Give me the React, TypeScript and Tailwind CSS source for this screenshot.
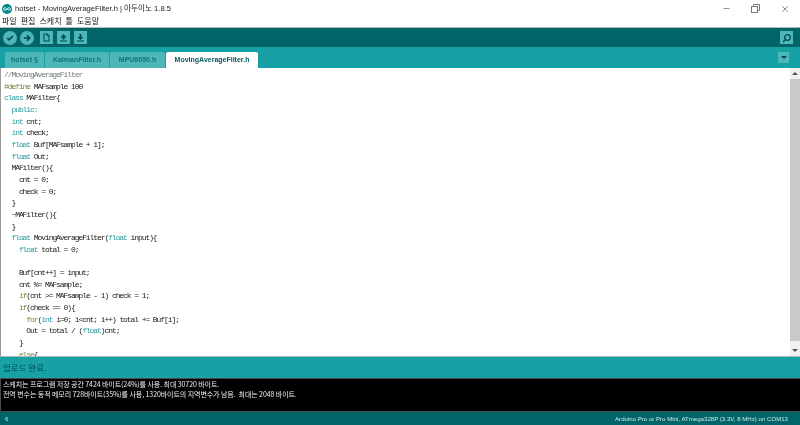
import React from 'react';
import { Minus, X } from 'lucide-react';

const KW = 'text-[#2a9ca0]';
const PP = 'text-[#76883c]';

type Seg = [string, string?];

const lines: Seg[][] = [
  [['//MovingAverageFilter', 'text-[#707a7a]']],
  [['#define', PP], [' MAFsample 100']],
  [['class', KW], [' MAFilter{']],
  [['  public:', KW]],
  [['  '], ['int', KW], [' cnt;']],
  [['  '], ['int', KW], [' check;']],
  [['  '], ['float', KW], [' Buf[MAFsample + 1];']],
  [['  '], ['float', KW], [' Out;']],
  [['  MAFilter(){']],
  [['    cnt = 0;']],
  [['    check = 0;']],
  [['  }']],
  [['  ~MAFilter(){']],
  [['  }']],
  [['  '], ['float', KW], [' MovingAverageFilter('], ['float', KW], [' input){']],
  [['    '], ['float', KW], [' total = 0;']],
  [[' ']],
  [['    Buf[cnt++] = input;']],
  [['    cnt %= MAFsample;']],
  [['    '], ['if', PP], ['(cnt >= MAFsample - 1) check = 1;']],
  [['    '], ['if', PP], ['(check == 0){']],
  [['      '], ['for', PP], ['('], ['int', KW], [' i=0; i<cnt; i++) total += Buf[i];']],
  [['      Out = total / ('], ['float', KW], [')cnt;']],
  [['    }']],
  [['    '], ['else', PP], ['{']],
];

function ArduinoLogo() {
  return (
    <svg width="10" height="10" viewBox="0 0 22 22">
      <circle cx="11" cy="11" r="11" fill="#00878f" />
      <path d="M6.5 8c-4 0-4 6 0 6 2.500 0 3.500-3 4.500-3s2 3 4.500 3c4 0 4-6 0-6-2.500 0-3.500 3-4.500 3s-2-3-4.500-3z" fill="none" stroke="#fff" strokeWidth="1.800" />
    </svg>
  );
}

function RoundButton({ children }: { children: React.ReactNode }) {
  return (
    <div className="w-[14px] h-[14px] rounded-full bg-[#4db6b9] flex items-center justify-center">
      <svg width="10" height="10" viewBox="0 0 11 11" fill="none" stroke="#00494d" strokeWidth="1.800">
        {children}
      </svg>
    </div>
  );
}

function SquareButton({ children }: { children: React.ReactNode }) {
  return (
    <div className="w-[13px] h-[13px] bg-[#4db6b9] flex items-center justify-center">
      <svg width="9" height="9" viewBox="0 0 9 9" fill="#00494d">
        {children}
      </svg>
    </div>
  );
}

function Tab({ label, width, active }: { label: string; width: string; active?: boolean }) {
  return (
    <div
      className={
        (active
          ? 'bg-white text-[#005c5f] '
          : 'bg-[#4db6b9] text-[#0b7478] ') +
        width +
        ' h-[16px] flex items-center justify-center text-[7px] font-bold rounded-t-[2px]'
      }
    >
      {label}
    </div>
  );
}

export default function App() {
  return (
    <div className="w-[800px] h-[425px] flex flex-col overflow-hidden bg-white font-['Liberation_Sans',sans-serif] blur-[0.3px]">
      {/* window title */}
      <div className="h-[15px] pt-[2px] flex items-center bg-white shrink-0">
        <div className="ml-[2px] mr-[3px] flex"><ArduinoLogo /></div>
        <span className="text-[7.6px] text-[#222] font-['Liberation_Sans','Noto_Sans_CJK_KR',sans-serif]">hotset - MovingAverageFilter.h | 아두이노 1.8.5</span>
        <div className="ml-auto flex items-center text-[#777]">
          <Minus size={9} className="mr-[20px]" />
          <svg width="9" height="9" viewBox="0 0 9 9" fill="none" stroke="#777" className="mr-[20px]">
            <rect x="0.500" y="2.500" width="6" height="6" />
            <path d="M2.500 2.500v-2h6v6h-2" />
          </svg>
          <X size={10} className="mr-[10px]" />
        </div>
      </div>
      {/* menu */}
      <div className="h-[12px] flex items-center gap-[4px] pl-[2px] bg-white text-[8px] text-[#111] font-['Noto_Sans_CJK_KR',sans-serif] shrink-0">
        <span>파일</span>
        <span>편집</span>
        <span>스케치</span>
        <span>툴</span>
        <span>도움말</span>
      </div>
      <div className="h-[1px] bg-[#b8b8b8] shrink-0" />
      {/* toolbar */}
      <div className="h-[19px] bg-[#006468] flex items-center pl-[3px] pr-[7px] shrink-0">
        <div className="flex items-center gap-[3px]">
          <RoundButton><path d="M2.500 5.500l2 2 4-4" /></RoundButton>
          <RoundButton><path d="M2 5.500h6.500M5.500 2.500l3 3-3 3" /></RoundButton>
        </div>
        <div className="flex items-center gap-[4px] ml-[6px]">
          <SquareButton><path d="M1.500 0.500h4l2 2v6h-6zM2.500 1.500v6h4v-4.500h-1.500v-1.500z" fillRule="evenodd" /></SquareButton>
          <SquareButton><path d="M4.500 1l3 3.500h-2v2h-2v-2h-2zM1 7.500h7v1h-7z" /></SquareButton>
          <SquareButton><path d="M3.500 1h2v3h2l-3 3-3-3h2zM1 7.500h7v1h-7z" /></SquareButton>
        </div>
        <div className="ml-auto w-[13px] h-[13px] bg-[#4db6b9] flex items-center justify-center">
          <svg width="10" height="10" viewBox="0 0 10 10" fill="none" stroke="#00494d" strokeWidth="1.300">
            <circle cx="5.500" cy="4.500" r="2.800" />
            <path d="M3.500 6.500l-2.500 2.500" />
          </svg>
        </div>
      </div>
      {/* tabs */}
      <div className="h-[21px] bg-[#17a1a5] flex items-end pl-[5px] pr-[11px] shrink-0">
        <div className="flex gap-[1px]">
          <Tab label="hotset §" width="w-[39px]" />
          <Tab label="KalmanFilter.h" width="w-[64px]" />
          <Tab label="MPU6050.h" width="w-[55px]" />
          <Tab label="MovingAverageFilter.h" width="w-[92px]" active />
        </div>
        <div className="ml-auto mb-[5px] w-[11px] h-[11px] bg-[#4db6b9] flex items-center justify-center">
          <div className="w-0 h-0 border-x-[3px] border-x-transparent border-t-[3px] border-t-[#00494d]" />
        </div>
      </div>
      {/* editor */}
      <div className="flex-1 min-h-0 flex bg-white">
        <div className="w-[1px] bg-[#9a9a9a]" />
        <pre className="flex-1 overflow-hidden pl-[3px] pt-[1px] font-['Liberation_Mono',monospace] text-[8px] leading-[11.67px] tracking-[-1.08px] text-[#222]">
          {lines.map((segs, i) => (
            <div key={i} className="h-[11.67px]">
              {segs.map((s, j) => (
                <span key={j} className={s[1]}>{s[0]}</span>
              ))}
            </div>
          ))}
        </pre>
        <div className="w-[10px] flex flex-col bg-[#f1f1f1] items-center">
          <div className="h-[11px] flex items-center">
            <div className="w-0 h-0 border-x-[3px] border-x-transparent border-b-[3px] border-b-[#555]" />
          </div>
          <div className="h-[262px] w-full bg-[#c9c9c9]" />
          <div className="mt-auto h-[11px] flex items-center">
            <div className="w-0 h-0 border-x-[3px] border-x-transparent border-t-[3px] border-t-[#555]" />
          </div>
        </div>
      </div>
      <div className="h-[1px] bg-[#b8b8b8] shrink-0" />
      {/* status */}
      <div className="h-[21px] bg-[#17a1a5] flex items-center pl-[3px] text-[8.5px] text-[#004e52] font-['Noto_Sans_CJK_KR',sans-serif] shrink-0">
        업로드 완료.
      </div>
      {/* console */}
      <div className="h-[34px] bg-black border-l border-y border-[#4a4a4a] pl-[2px] pt-[1px] text-[7px] leading-[9.500px] tracking-[-0.08px] text-[#eee] font-['Noto_Sans_CJK_KR',sans-serif] shrink-0 whitespace-pre">
        <div>스케치는 프로그램 저장 공간 7424 바이트(24%)를 사용. 최대 30720 바이트.</div>
        <div>전역 변수는 동적 메모리 728바이트(35%)를 사용, 1320바이트의 지역변수가 남음.  최대는 2048 바이트.</div>
      </div>
      {/* footer */}
      <div className="h-[13px] bg-[#006468] flex items-center justify-between pl-[5px] pr-[12px] text-[6.1px] text-[#cfeaea] shrink-0">
        <span>6</span>
        <span>Arduino Pro or Pro Mini, ATmega328P (3.3V, 8 MHz) on COM13</span>
      </div>
    </div>
  );
}
